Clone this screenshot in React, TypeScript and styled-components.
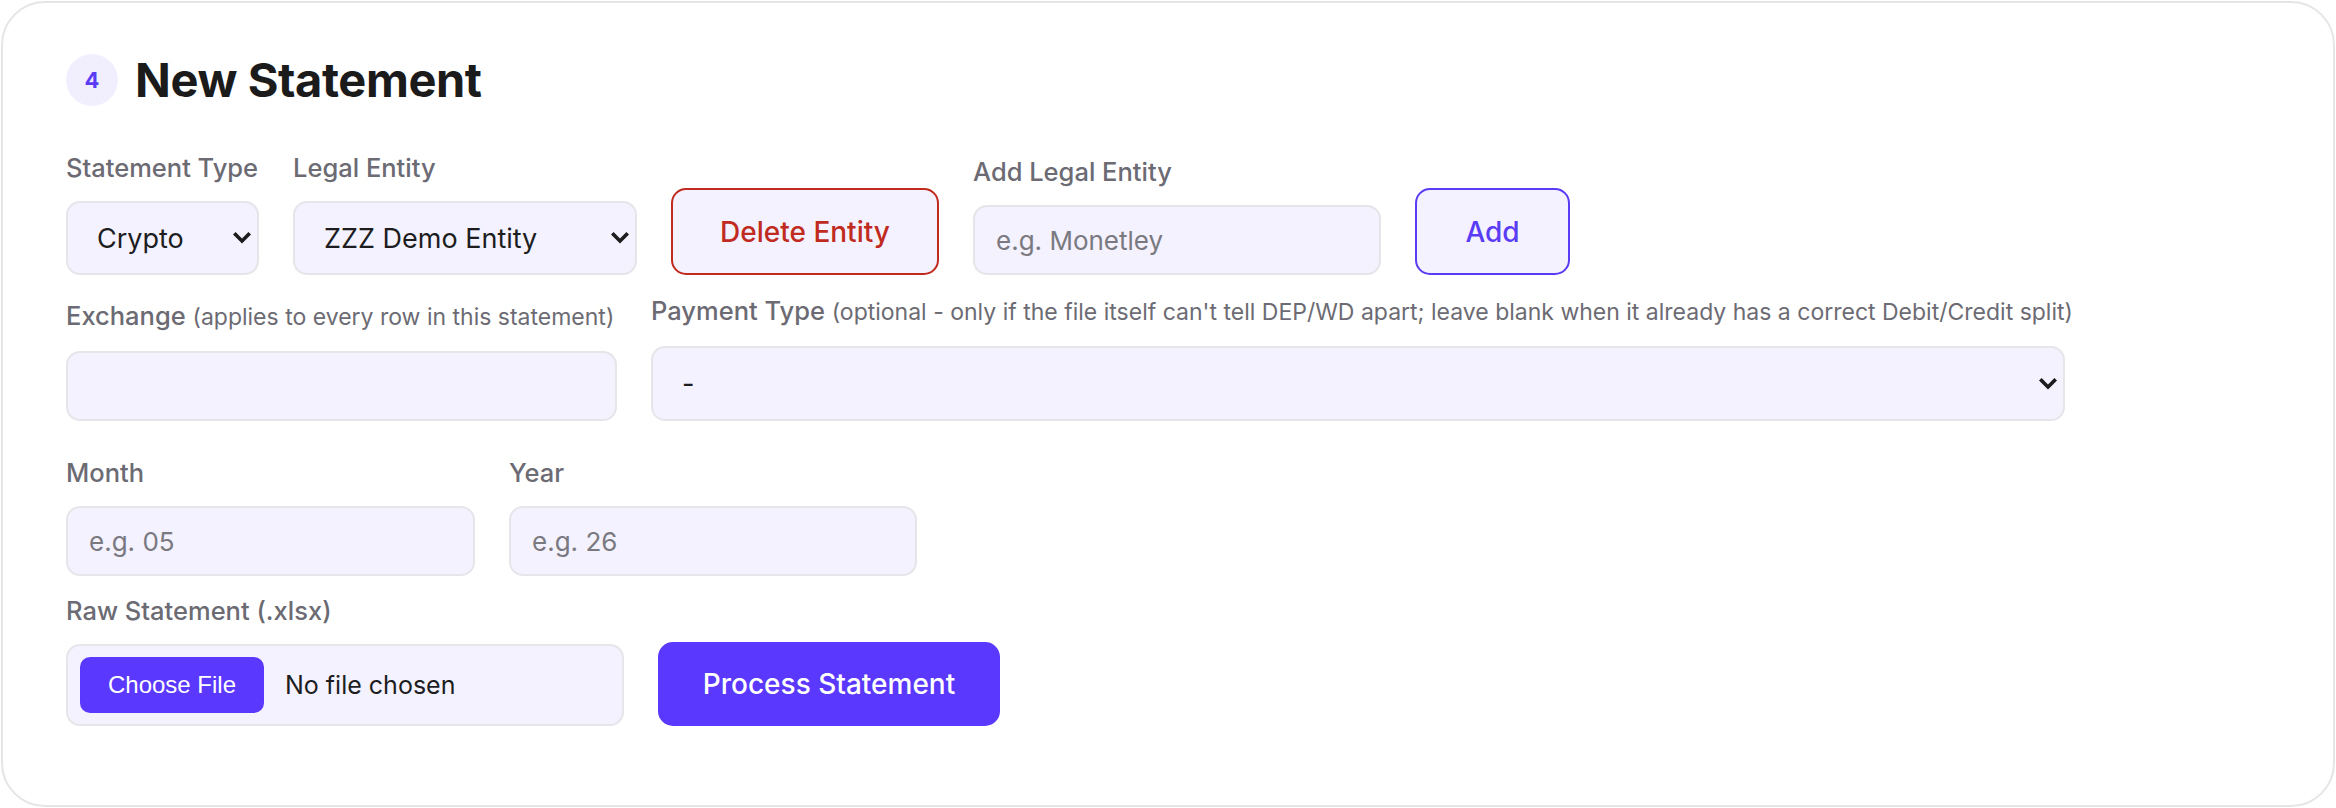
import React from "react";
import styled, { createGlobalStyle, css } from "styled-components";

const GlobalStyle = createGlobalStyle`
  html, body { margin: 0; padding: 0; background: #ffffff; }
  body { font-family: Inter, "Noto Sans", sans-serif; }
  #root { padding: 1px; }
  *, *::before, *::after { box-sizing: border-box; }
`;

const Card = styled.section`
  display: flex;
  flex-direction: column;
  background: #ffffff;
  border: 2px solid #e5e5e7;
  border-radius: 44px;
  padding: 51px 63px 79px;
`;

const Header = styled.header`
  display: flex;
  align-items: center;
  gap: 17px;
  height: 52px;
  margin-bottom: 47px;
`;

const Badge = styled.span`
  display: grid;
  place-items: center;
  width: 52px;
  height: 52px;
  border-radius: 50%;
  background: #f1effe;
  color: #5a3cf4;
  font-size: 22px;
  font-weight: 700;
`;

const Title = styled.h2`
  margin: 0;
  font-size: 47px;
  line-height: 52px;
  font-weight: 700;
  color: #1b1b1c;
  letter-spacing: -0.4px;
`;

const Row = styled.div<{ $mt?: number }>`
  display: flex;
  align-items: flex-end;
  gap: 34px;
  margin-top: ${(p) => p.$mt ?? 0}px;
`;

const Field = styled.div<{ $w: number }>`
  display: flex;
  flex-direction: column;
  gap: 19px;
  width: ${(p) => p.$w}px;
  flex: none;
`;

const Label = styled.label`
  font-size: 25.5px;
  line-height: 29px;
  font-weight: 500;
  color: #6c6b73;
  white-space: nowrap;
`;

const Hint = styled.span`
  font-size: 23px;
  font-weight: 400;
`;

const fieldBox = css`
  width: 100%;
  border: 2px solid #e6e5ea;
  border-radius: 14px;
  background: #f3f2fe;
  font-family: Inter, "Noto Sans", sans-serif;
  color: #1d1d1f;
  outline: none;
`;

const SelectWrap = styled.div<{ $h?: number }>`
  position: relative;
  height: ${(p) => p.$h ?? 74}px;
`;

const Select = styled.select`
  ${fieldBox};
  height: 100%;
  font-size: 27px;
  appearance: none;
  -webkit-appearance: none;
  padding: 0 44px 0 29px;
`;

const Chevron = styled.svg`
  position: absolute;
  right: 8px;
  top: 50%;
  transform: translateY(-50%);
  pointer-events: none;
`;

const Input = styled.input`
  ${fieldBox};
  height: 70px;
  font-size: 26px;
  padding: 0 21px;
  &::placeholder {
    color: #7a7980;
    opacity: 1;
  }
`;

const Button = styled.button<{ $variant: "danger" | "outline" | "primary"; $w: number; $h: number }>`
  flex: none;
  width: ${(p) => p.$w}px;
  height: ${(p) => p.$h}px;
  border-radius: 15px;
  font-family: Inter, "Noto Sans", sans-serif;
  font-size: 28px;
  font-weight: 500;
  cursor: pointer;
  ${(p) =>
    p.$variant === "danger" &&
    css`
      background: #f3f2fe;
      border: 2px solid #c12a1e;
      color: #c12a1e;
    `}
  ${(p) =>
    p.$variant === "outline" &&
    css`
      background: #f3f2fe;
      border: 2px solid #5a3cf5;
      color: #5a3cf5;
    `}
  ${(p) =>
    p.$variant === "primary" &&
    css`
      background: #5a38fd;
      border: none;
      color: #ffffff;
    `}
`;

const FileBox = styled.label`
  ${fieldBox};
  display: flex;
  align-items: center;
  gap: 21px;
  height: 82px;
  padding: 0 12px;
  cursor: pointer;
`;

const HiddenInput = styled.input`
  display: none;
`;

const ChooseButton = styled.span`
  display: flex;
  align-items: center;
  justify-content: center;
  width: 184px;
  height: 56px;
  border-radius: 10px;
  background: #5a38fd;
  color: #ffffff;
  font-family: "Liberation Sans", Arial, sans-serif;
  font-size: 24px;
`;

const FileName = styled.span`
  font-size: 25px;
  color: #1d1d1f;
`;

const ChevronIcon = () => (
  <Chevron width="18" height="12" viewBox="0 0 18 12" aria-hidden="true">
    <path d="M0 2.6 L2.6 0 L9 6.4 L15.4 0 L18 2.6 L9 11.6 Z" fill="#1d1d1f" />
  </Chevron>
);

function SelectField({
  width,
  label,
  value,
  options,
  height,
}: {
  width: number;
  label: React.ReactNode;
  value: string;
  options: string[];
  height?: number;
}) {
  return (
    <Field $w={width}>
      <Label>{label}</Label>
      <SelectWrap $h={height}>
        <Select defaultValue={value}>
          {options.map((o) => (
            <option key={o} value={o}>
              {o}
            </option>
          ))}
        </Select>
        <ChevronIcon />
      </SelectWrap>
    </Field>
  );
}

function TextField({ width, label, placeholder }: { width: number; label: React.ReactNode; placeholder?: string }) {
  return (
    <Field $w={width}>
      <Label>{label}</Label>
      <Input type="text" placeholder={placeholder} />
    </Field>
  );
}

export default function App() {
  return (
    <>
      <GlobalStyle />
      <Card>
        <Header>
          <Badge>4</Badge>
          <Title>New Statement</Title>
        </Header>

        <Row>
          <SelectField width={193} label="Statement Type" value="Crypto" options={["Crypto", "Bank"]} />
          <SelectField
            width={344}
            label="Legal Entity"
            value="ZZZ Demo Entity"
            options={["ZZZ Demo Entity"]}
          />
          <Button $variant="danger" $w={268} $h={87}>
            Delete Entity
          </Button>
          <TextField width={408} label="Add Legal Entity" placeholder="e.g. Monetley" />
          <Button $variant="outline" $w={155} $h={87}>
            Add
          </Button>
        </Row>

        <Row $mt={21}>
          <TextField
            width={551}
            label={
              <>
                Exchange <Hint>(applies to every row in this statement)</Hint>
              </>
            }
          />
          <SelectField
            width={1414}
            height={75}
            label={
              <>
                Payment Type{" "}
                <Hint>
                  (optional - only if the file itself can't tell DEP/WD apart; leave blank when it already has a
                  correct Debit/Credit split)
                </Hint>
              </>
            }
            value="-"
            options={["-", "DEP", "WD"]}
          />
        </Row>

        <Row $mt={37}>
          <TextField width={409} label="Month" placeholder="e.g. 05" />
          <TextField width={408} label="Year" placeholder="e.g. 26" />
        </Row>

        <Row $mt={20}>
          <Field $w={558}>
            <Label>Raw Statement (.xlsx)</Label>
            <FileBox>
              <HiddenInput type="file" accept=".xlsx" />
              <ChooseButton>Choose File</ChooseButton>
              <FileName>No file chosen</FileName>
            </FileBox>
          </Field>
          <Button $variant="primary" $w={342} $h={84}>
            Process Statement
          </Button>
        </Row>
      </Card>
    </>
  );
}
